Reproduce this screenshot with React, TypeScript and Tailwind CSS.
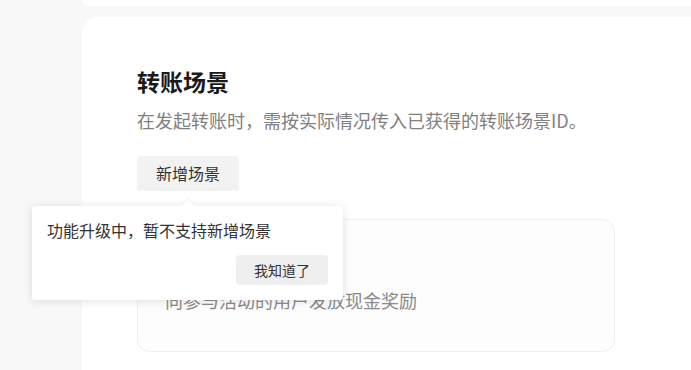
import React from "react";

const font = { fontFamily: '"Noto Sans CJK SC", "Noto Sans", sans-serif' };

export default function App() {
  return (
    <div className="flex h-[370px] w-[691px] overflow-hidden bg-[#f8f8f8]" style={font}>
      <div className="w-[82px] shrink-0" />
      <div className="flex flex-1 flex-col gap-[11px]">
        <div className="h-[6px] rounded-bl-2xl bg-white" />
        <div className="flex-1 rounded-tl-2xl bg-white pl-[55px] pt-[48px]">
          <h1 className="text-[23px] font-bold leading-[32px] text-[#1a1a1a]">转账场景</h1>
          <p className="mt-[9px] text-[18px] leading-[28px] text-[#808080]">
            在发起转账时，需按实际情况传入已获得的转账场景ID。
          </p>
          <div className="relative mt-[22px] w-fit">
            <button className="h-[35px] rounded-[4px] bg-[#f2f2f2] px-[19px] text-[16px] leading-[35px] text-[#333]">
              新增场景
            </button>
            <div className="absolute left-[-105px] top-[50px] z-10 w-[311px] rounded-[3px] bg-white px-[15px] pb-[15px] pt-[12px] shadow-[0_1px_10px_rgba(0,0,0,0.12)]">
              <div className="absolute left-[151px] top-[-5px] h-[10px] w-[10px] rotate-45 bg-white shadow-[-1px_-1px_2px_rgba(0,0,0,0.05)]" />
              <p className="relative text-[16px] leading-[24px] text-[#333]">功能升级中，暂不支持新增场景</p>
              <div className="mt-[13px] flex justify-end">
                <button className="h-[30px] w-[92px] rounded-[4px] bg-[#efefef] text-[14px] text-[#333]">
                  我知道了
                </button>
              </div>
            </div>
          </div>
          <div className="mt-[28px] h-[133px] w-[478px] rounded-[12px] border border-[#efefef] bg-[#fdfdfd] pl-[27px] pt-[68px]">
            <p className="text-[18px] leading-[24px] text-[#8a8a8a]">向参与活动的用户发放现金奖励</p>
          </div>
        </div>
      </div>
    </div>
  );
}
